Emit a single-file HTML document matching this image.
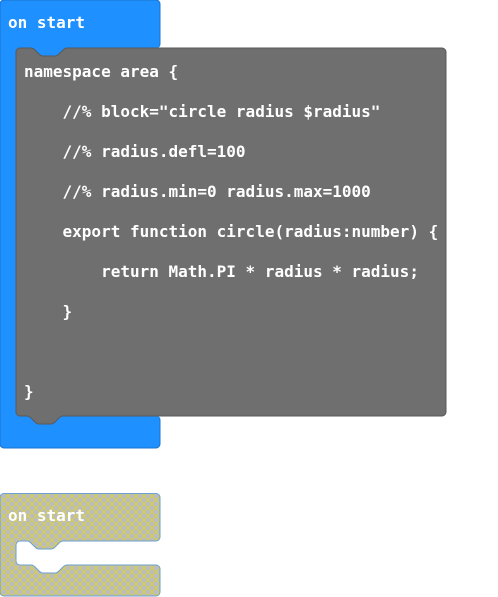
<!DOCTYPE html>
<html><head><meta charset="utf-8"><style>
html,body{margin:0;padding:0;background:#fff;width:498px;height:597px;overflow:hidden}
text{font-family:"DejaVu Sans Mono","Liberation Mono",monospace;font-weight:bold;font-size:16px;fill:#fff;white-space:pre}
</style></head><body>
<svg width="498" height="597" viewBox="0 0 498 597" xmlns="http://www.w3.org/2000/svg">
<defs>
<pattern id="h" width="8" height="8" patternUnits="userSpaceOnUse">
<rect width="8" height="8" fill="#bcbcbc"/>
<path d="M-1,1 L1,-1 M0,8 L8,0 M7,9 L9,7 M-1,7 L1,9 M0,0 L8,8 M7,-1 L9,1" stroke="#d8d33c" stroke-width="0.9"/>
</pattern>
</defs>
<path d="M4,0 H156 a4,4 0 0 1 4,4 V44 a4,4 0 0 1 -4,4 H63 c-2,0 -3,1 -4,2 l-4,4 c-1,1 -2,2 -4,2 h-12 c-2,0 -3,-1 -4,-2 l-4,-4 c-1,-1 -2,-2 -4,-2 H20 a4,4 0 0 0 -4,4 V412 a4,4 0 0 0 4,4 H31 c2,0 3,1 4,2 l4,4 c1,1 2,2 4,2 h12 c2,0 3,-1 4,-2 l4,-4 c1,-1 2,-2 4,-2 H156 a4,4 0 0 1 4,4 V444 a4,4 0 0 1 -4,4 H4 a4,4 0 0 1 -4,-4 V4 a4,4 0 0 1 4,-4 Z" fill="#1e90ff" stroke="#1873cc" stroke-width="1"/>
<rect x="16" y="44" width="143" height="396" fill="#1e90ff"/>
<path d="M20,48 H31 c2,0 3,1 4,2 l4,4 c1,1 2,2 4,2 h12 c2,0 3,-1 4,-2 l4,-4 c1,-1 2,-2 4,-2 H442 a4,4 0 0 1 4,4 V412 a4,4 0 0 1 -4,4 H63 c-2,0 -3,1 -4,2 l-4,4 c-1,1 -2,2 -4,2 h-12 c-2,0 -3,-1 -4,-2 l-4,-4 c-1,-1 -2,-2 -4,-2 H20 a4,4 0 0 1 -4,-4 V52 a4,4 0 0 1 4,-4 Z" fill="#6f6f6f" stroke="#5a5a5a" stroke-width="1"/>
<text x="8" y="28">on start</text>
<text x="24" y="77">namespace area {</text>
<text x="24" y="117">    //% block="circle radius $radius"</text>
<text x="24" y="157">    //% radius.defl=100</text>
<text x="24" y="197">    //% radius.min=0 radius.max=1000</text>
<text x="24" y="237">    export function circle(radius:number) {</text>
<text x="24" y="277">        return Math.PI * radius * radius;</text>
<text x="24" y="317">    }</text>
<text x="24" y="397">}</text>
<path d="M4,493.5 H156 a4,4 0 0 1 4,4 V537 a4,4 0 0 1 -4,4 H63 c-2,0 -3,1 -4,2 l-4,4 c-1,1 -2,2 -4,2 h-12 c-2,0 -3,-1 -4,-2 l-4,-4 c-1,-1 -2,-2 -4,-2 H20 a4,4 0 0 0 -4,4 V561 a4,4 0 0 0 4,4 H31 c2,0 3,1 4,2 l4,4 c1,1 2,2 4,2 h12 c2,0 3,-1 4,-2 l4,-4 c1,-1 2,-2 4,-2 H156 a4,4 0 0 1 4,4 V592 a4,4 0 0 1 -4,4 H4 a4,4 0 0 1 -4,-4 V497.5 a4,4 0 0 1 4,-4 Z" fill="url(#h)" stroke="#6c9fd2" stroke-width="1"/>
<text x="8" y="521">on start</text>
</svg>
</body></html>
